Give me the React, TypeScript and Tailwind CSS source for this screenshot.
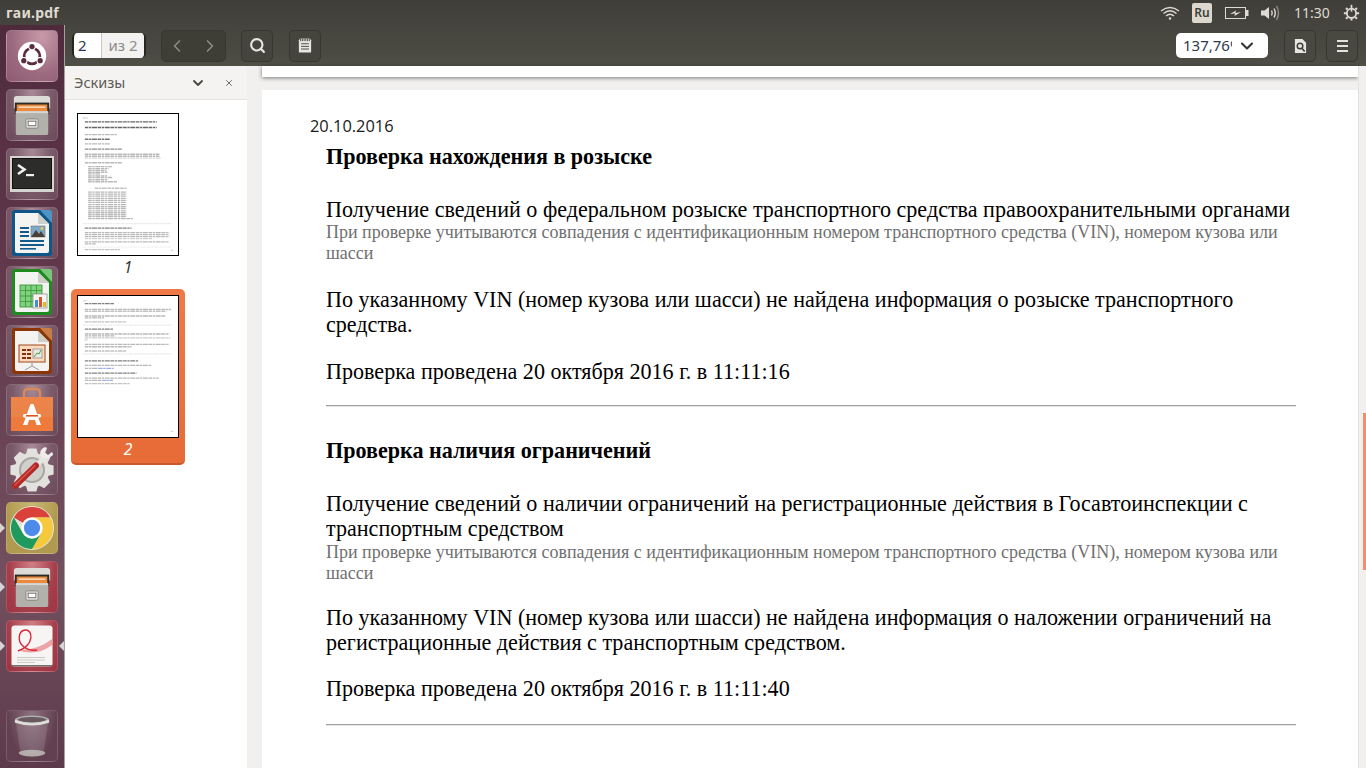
import type { ReactNode } from 'react';
import { ChevronDown, ChevronLeft, ChevronRight, Search, X } from 'lucide-react';

type Line = [number, number, number, number, string?];

// thumbnail text lines: y, x0, x1, opacity, colour (3x coords of the thumbnail)
const thumbOne: Line[] = ([
  [35, 36, 52, 0.15], [47, 42, 262, 0.6], [64, 42, 262, 0.6], [86, 42, 140, 0.28], [100, 42, 120, 0.55],
  [114, 42, 118, 0.28], [130, 42, 155, 0.45], [146, 42, 270, 0.28], [152, 42, 270, 0.28], [158, 42, 275, 0.16],
  [172, 42, 155, 0.28], [184, 52, 125, 0.28], [190, 52, 115, 0.28], [195, 52, 108, 0.28], [201, 52, 112, 0.28],
  [206, 52, 88, 0.28], [212, 52, 110, 0.28], [217, 52, 125, 0.28], [224, 52, 112, 0.28], [230, 52, 140, 0.28],
  [250, 72, 170, 0.24], [262, 52, 170, 0.28], [268, 52, 170, 0.28], [274, 52, 170, 0.28], [281, 52, 170, 0.28],
  [287, 52, 170, 0.28], [293, 52, 170, 0.28], [300, 52, 170, 0.28], [306, 52, 170, 0.28], [312, 52, 170, 0.28],
  [319, 52, 170, 0.28], [325, 52, 170, 0.28], [331, 52, 170, 0.28], [337, 52, 170, 0.28], [343, 52, 190, 0.28],
  [358, 36, 305, 0.08], [372, 42, 185, 0.5], [386, 42, 300, 0.28], [392, 42, 300, 0.28], [398, 42, 300, 0.28],
  [404, 42, 250, 0.18], [414, 42, 300, 0.28], [420, 42, 75, 0.28], [430, 36, 305, 0.05], [438, 42, 150, 0.24],
  [440, 305, 312, 0.16],
] as Line[]).map(([y, x0, x1, o]): Line => [y - 24, x0 - 21, x1 - 21, o]);

const thumbTwo: Line[] = [
  [13, 15, 29, 0.15], [22, 21, 111, 0.5], [40, 21, 284, 0.28], [46, 21, 270, 0.24], [60, 21, 269, 0.28],
  [66, 21, 80, 0.28], [78, 21, 147, 0.24], [88, 15, 287, 0.08], [100, 21, 107, 0.5], [115, 21, 279, 0.28],
  [121, 21, 114, 0.28], [127, 21, 282, 0.2], [133, 21, 29, 0.2], [147, 21, 279, 0.28], [154, 21, 164, 0.28],
  [167, 21, 147, 0.24], [176, 15, 287, 0.08], [197, 21, 184, 0.5], [211, 21, 224, 0.28], [220, 21, 64, 0.28],
  [220, 64, 109, 0.5, '#3b5bdb'], [235, 21, 179, 0.5], [250, 21, 247, 0.28], [257, 21, 74, 0.28],
  [257, 74, 107, 0.5, '#3b5bdb'], [267, 21, 159, 0.24], [413, 284, 291, 0.16],
];

function Thumb({ lines }: { lines: Line[] }) {
  return (
    <div className="w-[102px] h-[143px] bg-white border border-black">
      <svg viewBox="0 0 306 429" className="block w-full h-full blur-[0.4px]">
        {lines.map(([y, x0, x1, o, c], i) => (
          <line key={i} x1={x0} x2={x1} y1={y} y2={y} stroke={c || '#000'} strokeWidth={4} strokeDasharray="11 2 7 2 15 2" opacity={o} />
        ))}
      </svg>
    </div>
  );
}

function Tile({ tone = 'plain', mark, children }: { tone?: 'plain' | 'pink' | 'gold' | 'red' | 'trash'; mark?: 'left' | 'both'; children: ReactNode }) {
  const toneClass = {
    plain: 'bg-[radial-gradient(ellipse_at_50%_0%,#a98b97_0%,#7b5a69_55%,#6c4a5a_100%)]',
    pink: 'bg-[radial-gradient(ellipse_at_70%_10%,#c79aa9_0%,#9c6a7f_60%,#8e5c72_100%)]',
    gold: 'bg-[radial-gradient(ellipse_at_50%_0%,#c9b777_0%,#b09a4f_70%)]',
    red: 'bg-[radial-gradient(ellipse_at_50%_0%,#cf7f86_0%,#a63f4b_65%,#9c3441_100%)]',
    trash: 'bg-[radial-gradient(ellipse_at_50%_0%,#8e7180_0%,#62404f_70%)]',
  }[tone];
  return (
    <div className="relative flex justify-center">
      {mark && <span className="absolute left-0 top-[21px] border-y-[5px] border-l-[5px] border-y-transparent border-l-[#d8d4d6]" />}
      {mark === 'both' && <span className="absolute right-0 top-[21px] border-y-[5px] border-r-[5px] border-y-transparent border-r-[#d8d4d6]" />}
      <div className={`w-[52px] h-[52px] rounded-[5px] flex items-center justify-center overflow-hidden border border-white/15 ${toneClass}`}>
        {children}
      </div>
    </div>
  );
}

function UbuntuIcon() {
  return (
    <svg viewBox="0 0 40 40" className="w-[42px] h-[42px]">
      <circle cx="20" cy="20" r="13.5" fill="#fff" />
      <circle cx="20" cy="20" r="7.5" fill="none" stroke="#5a2c42" strokeWidth="2.6" />
      <circle cx="20" cy="11.2" r="3.5" fill="#fff" />
      <circle cx="12.4" cy="24.4" r="3.5" fill="#fff" />
      <circle cx="27.6" cy="24.4" r="3.5" fill="#fff" />
      <circle cx="20" cy="11" r="2.5" fill="#5a2c42" />
      <circle cx="12.2" cy="24.5" r="2.5" fill="#5a2c42" />
      <circle cx="27.8" cy="24.5" r="2.5" fill="#5a2c42" />
    </svg>
  );
}

function FilesIcon() {
  return (
    <svg viewBox="0 0 44 46" className="w-[42px] h-[44px]">
      <path d="M3 6 Q3 3 6 3 H38 Q41 3 41 6 V16 H3 Z" fill="#dedcd8" />
      <rect x="4" y="10" width="36" height="12" fill="#2d2b29" />
      <rect x="6" y="12" width="32" height="9" fill="#e98a3c" />
      <rect x="8" y="14" width="28" height="1.5" fill="#fbe3c6" />
      <rect x="5" y="19" width="34" height="25" rx="1.5" fill="#b3b1ac" />
      <rect x="5" y="19" width="34" height="2" fill="#d9d7d2" />
      <rect x="15.5" y="27" width="13" height="10" rx="1.5" fill="#d2d0cb" stroke="#8d8b86" />
      <rect x="18" y="29.5" width="8" height="4.5" fill="#fff" stroke="#444" strokeWidth="0.6" />
    </svg>
  );
}

function TerminalIcon() {
  return (
    <svg viewBox="0 0 46 38" className="w-[46px] h-[38px]">
      <rect x="1" y="1" width="44" height="36" fill="#d5d4d0" />
      <rect x="3.5" y="3.5" width="39" height="30" fill="#2c2c2a" stroke="#111" />
      <path d="M9 10 L15.5 14.5 L9 19" fill="none" stroke="#f0f0ee" strokeWidth="2.6" />
      <rect x="17" y="19" width="8" height="2.2" fill="#f0f0ee" />
    </svg>
  );
}

function DocShell({ edge, fold, children }: { edge: string; fold: string; children: ReactNode }) {
  return (
    <svg viewBox="0 0 40 48" className="w-[40px] h-[48px]">
      <rect x="0" y="1" width="40" height="46" rx="3" fill={edge} />
      <path d="M28 1 H38 Q40 1 40 3 V14 Z" fill={fold} />
      <path d="M3 4 H26 L37 15 V42 Q37 44 35 44 H5 Q3 44 3 42 Z" fill="#f3f3f1" />
      <path d="M26 4 L37 15 H26 Z" fill="#cfcfca" />
      {children}
    </svg>
  );
}

function WriterIcon() {
  return (
    <DocShell edge="#0f5688" fold="#4f93c2">
      <rect x="8" y="18" width="9" height="2" fill="#135a8d" />
      <rect x="8" y="22" width="9" height="2" fill="#135a8d" />
      <rect x="8" y="26" width="9" height="2" fill="#135a8d" />
      <rect x="8" y="31" width="24" height="2" fill="#135a8d" />
      <rect x="8" y="35" width="24" height="2" fill="#135a8d" />
      <rect x="8" y="39" width="16" height="1.6" fill="#135a8d" />
      <rect x="19" y="17" width="14" height="11" fill="#7ea8c8" stroke="#777" strokeWidth="0.6" />
      <path d="M19 28 L24 21 L27 25 L29 22 L33 28 Z" fill="#4a4038" />
      <circle cx="30" cy="19.5" r="1.4" fill="#f0c94a" />
    </DocShell>
  );
}

function CalcIcon() {
  return (
    <DocShell edge="#1f8a1f" fold="#7cc67c">
      <rect x="8" y="17" width="22" height="22" fill="#7fd07f" stroke="#2c922c" strokeWidth="0.8" />
      <path d="M8 22.5 H30 M8 28 H30 M8 33.5 H30 M13.5 17 V39 M19 17 V39 M24.5 17 V39" stroke="#2c922c" strokeWidth="0.7" />
      <rect x="21" y="26" width="14" height="14" fill="#f5f5f3" stroke="#888" strokeWidth="0.7" />
      <rect x="23" y="32" width="3" height="7" fill="#3c92d0" />
      <rect x="27" y="29" width="3" height="10" fill="#d8552c" />
      <rect x="31" y="34" width="3" height="5" fill="#e8b52e" />
    </DocShell>
  );
}

function ImpressIcon() {
  return (
    <DocShell edge="#8a3608" fold="#c77c45">
      <rect x="7" y="18" width="26" height="17" fill="#f9d9bf" stroke="#a4481a" strokeWidth="1" />
      <rect x="10" y="22" width="4" height="2" fill="#7a3410" />
      <rect x="15" y="22" width="4" height="2" fill="#7a3410" />
      <rect x="10" y="26" width="4" height="2" fill="#7a3410" />
      <rect x="15" y="26" width="4" height="2" fill="#7a3410" />
      <rect x="10" y="30" width="4" height="2" fill="#7a3410" />
      <rect x="15" y="30" width="4" height="2" fill="#7a3410" />
      <rect x="21" y="22" width="9" height="9" fill="#e9e9e4" stroke="#777" strokeWidth="0.6" />
      <path d="M22 30 L25 26 L27 27 L29 23" fill="none" stroke="#4aa13c" strokeWidth="1" />
      <path d="M20 35 V39 M20 39 L13 43 M20 39 L27 43" stroke="#999" strokeWidth="1" />
    </DocShell>
  );
}

function StoreIcon() {
  return (
    <svg viewBox="0 0 42 46" className="w-[42px] h-[46px]">
      <path d="M13 12 V6 Q13 2 17 2 H25 Q29 2 29 6 V12" fill="none" stroke="#d88a5e" strokeWidth="2.4" />
      <path d="M0 10 H42 V44 H0 Z" fill="#ee7a3b" />
      <path d="M0 10 H42 V30 H0 Z" fill="#ec8348" />
      <path d="M19.5 17 H22.5 L30 38 H25.5 L24 33 H18 L16.5 38 H12 Z" fill="#fff" />
      <rect x="12" y="27" width="18" height="3.6" rx="1.5" fill="#fff" />
      <rect x="15" y="28" width="12" height="1.6" fill="#e0561e" />
    </svg>
  );
}

// eight tooth gear outline, centred on 23,24
const gearPath = Array.from({ length: 8 })
  .map((_, i) => {
    const a = (i * Math.PI) / 4;
    const pts = [
      [a - 0.34, 17.5],
      [a - 0.2, 22],
      [a + 0.2, 22],
      [a + 0.34, 17.5],
    ].map(([t, r]) => `${(23 + r * Math.cos(t)).toFixed(1)} ${(24 + r * Math.sin(t)).toFixed(1)}`);
    return (i === 0 ? 'M' : 'L') + pts.join(' L');
  })
  .join(' ') + ' Z';

function SettingsIcon() {
  return (
    <svg viewBox="0 0 46 46" className="w-[46px] h-[46px]">
      <path d={gearPath} fill="#e2e1dd" />
      <circle cx="23" cy="24" r="13" fill="#a7a6a2" />
      <circle cx="23" cy="24" r="11" fill="#d0cfcb" />
      <path d="M27 20 L37 10" stroke="#e6e5e1" strokeWidth="5" />
      <path d="M36 1 Q29 4 32 11 Q38 15 44 9 Q44 7 43 6 L39 9 L36 7 L38 2 Z" fill="#eeedea" />
      <path d="M6 40 L27 19.5" stroke="#b42a26" strokeWidth="6" strokeLinecap="round" />
      <path d="M6 39 L26 19.5" stroke="#dc5b52" strokeWidth="1.2" strokeLinecap="round" />
    </svg>
  );
}

function ChromeIcon() {
  return (
    <svg viewBox="0 0 48 48" className="w-[46px] h-[46px]">
      <circle cx="24" cy="24" r="23" fill="#e5e3dc" />
      <path d="M24 2 A22 22 0 0 1 43 13 L24 13 A11 11 0 0 0 14.5 18.5 L5 13 A22 22 0 0 1 24 2 Z" fill="#d9413a" />
      <path d="M43 13 A22 22 0 0 1 24 46 L33.5 29.5 A11 11 0 0 0 33.5 18.5 L24 13 Z" fill="#f6c93c" />
      <path d="M24 46 A22 22 0 0 1 5 13 L14.5 29.5 A11 11 0 0 0 33.5 29.5 Z" fill="#1f9a5c" />
      <circle cx="24" cy="24" r="11" fill="#fff" />
      <circle cx="24" cy="24" r="8.5" fill="#4d8bea" />
    </svg>
  );
}

function PdfIcon() {
  return (
    <svg viewBox="0 0 42 42" className="w-[42px] h-[42px]">
      <rect x="0.5" y="0.5" width="41" height="41" rx="3" fill="#f6f5f3" />
      <rect x="0.5" y="40" width="41" height="1.5" fill="#77716e" />
      <path d="M6 25 Q26 26 41 14 V20 Q26 32 6 25 Z" fill="#eda2a6" />
      <path d="M7 26 C24 20 22 4 14 5 C7 6 6 17 13 22 C17 25 20 26 26 25" fill="none" stroke="#d52a36" strokeWidth="1.4" />
      <path d="M6 32.5 H34 M6 35 H34 M6 37.5 H24" stroke="#c4c2be" strokeWidth="0.8" />
    </svg>
  );
}

function TrashIcon() {
  return (
    <svg viewBox="0 0 40 46" className="w-[38px] h-[44px]">
      <path d="M3 8 L8 42 Q20 47 32 42 L37 8 Z" fill="#ffffff" opacity="0.13" />
      <ellipse cx="20" cy="41" rx="14" ry="3.5" fill="#c8c8c4" opacity="0.75" />
      <ellipse cx="20" cy="6" rx="18" ry="4.5" fill="#aeaeaa" />
      <ellipse cx="20" cy="6" rx="15" ry="3" fill="#6a5a60" />
      <path d="M2 6 V9 Q20 15 38 9 V6 Q20 12 2 6 Z" fill="#dcdcd8" />
    </svg>
  );
}

function Launcher() {
  return (
    <aside className="w-[65px] shrink-0 flex flex-col gap-[7px] pt-[5px] pb-[6px] border-r border-[#a99da3] bg-[linear-gradient(180deg,#4f2a3d_0%,#63394c_35%,#71505f_75%,#5d3a4b_100%)]">
      <Tile tone="pink"><UbuntuIcon /></Tile>
      <Tile><FilesIcon /></Tile>
      <Tile><TerminalIcon /></Tile>
      <Tile><WriterIcon /></Tile>
      <Tile><CalcIcon /></Tile>
      <Tile><ImpressIcon /></Tile>
      <Tile><StoreIcon /></Tile>
      <Tile><SettingsIcon /></Tile>
      <Tile tone="gold" mark="left"><ChromeIcon /></Tile>
      <Tile tone="red" mark="left"><FilesIcon /></Tile>
      <Tile tone="red" mark="both"><PdfIcon /></Tile>
      <div className="flex-1" />
      <Tile tone="trash"><TrashIcon /></Tile>
    </aside>
  );
}

function ToolButton({ className = 'w-[32px]', children }: { className?: string; children: ReactNode }) {
  return (
    <div className={`h-[32px] flex items-center justify-center rounded-[5px] border border-[#38372f] ${className}`}>
      {children}
    </div>
  );
}

function Toolbar() {
  return (
    <div className="h-[41px] shrink-0 flex items-center pl-[7px] pr-[8px] bg-[linear-gradient(180deg,#45443d,#4a4941_60%,#504f47)] text-[15px]">
      <div className="w-[74px] h-[25px] flex rounded-[5px] bg-white border-x-2 border-x-[#26251f] overflow-hidden">
        <div className="w-[28px] pl-[4px] leading-[25px] text-[#2d3a50] border-r border-[#c9c7c2]">2</div>
        <div className="flex-1 text-center leading-[25px] text-[#8f8d8a] bg-[#f3f2f0]">из 2</div>
      </div>
      <ToolButton className="w-[65px] ml-[15px] bg-[#3e3d36] gap-[13px]">
        <ChevronLeft size={20} strokeWidth={2} className="text-[#8a8983]" />
        <ChevronRight size={20} strokeWidth={2} className="text-[#8a8983]" />
      </ToolButton>
      <ToolButton className="w-[32px] ml-[15px] bg-[#45443d]">
        <Search size={17} strokeWidth={3} className="text-[#e8e6e0]" />
      </ToolButton>
      <ToolButton className="w-[32px] ml-[16px] bg-[#45443d]">
        <svg viewBox="0 0 16 18" className="w-[14px] h-[17px]">
          <path d="M1 3 L2.5 1 H13.5 L15 3 V16 Q15 17 14 17 H2 Q1 17 1 16 Z" fill="#e8e6e0" />
          <path d="M3 1 V4 M5 1 V4 M7 1 V4 M9 1 V4 M11 1 V4 M13 1 V4 M3.5 7 H12.5 M3.5 10 H12.5 M3.5 13 H12.5" stroke="#3f3e38" strokeWidth="1" />
        </svg>
      </ToolButton>
      <div className="flex-1" />
      <div className="w-[92px] h-[25px] flex items-center rounded-[5px] bg-white pl-[7px] text-[#2d3a50]">
        <span className="w-[49px] overflow-hidden whitespace-nowrap">137,76%</span>
        <ChevronDown size={20} strokeWidth={2.5} className="ml-[5px] text-[#33322e]" />
      </div>
      <ToolButton className="w-[32px] ml-[16px] bg-[#4a4941]">
        <svg viewBox="0 0 14 16" className="w-[13px] h-[16px]">
          <path d="M1 0.5 H9 L13 4.5 V15.5 H1 Z" fill="#e8e6e0" />
          <circle cx="6.5" cy="8" r="3" fill="none" stroke="#3f3e38" strokeWidth="1.6" />
          <path d="M8.5 10.5 L11.5 14" stroke="#3f3e38" strokeWidth="1.8" />
        </svg>
      </ToolButton>
      <ToolButton className="w-[32px] ml-[10px] bg-[#4a4941]">
        <span className="flex flex-col gap-[3px]">
          <span className="block w-[11px] h-[2px] bg-[#e4e2dc]" />
          <span className="block w-[11px] h-[2px] bg-[#e4e2dc]" />
          <span className="block w-[11px] h-[2px] bg-[#e4e2dc]" />
        </span>
      </ToolButton>
    </div>
  );
}

function Sidebar() {
  return (
    <div className="w-[182px] shrink-0 flex flex-col bg-white">
      <div className="h-[34px] shrink-0 flex items-center pl-[9px] bg-[#f4f3f1] border-b border-[#e4e3e0] text-[14.5px] text-[#5d5b56]">
        <span className="flex-1">Эскизы</span>
        <ChevronDown size={16} strokeWidth={2.8} className="text-[#4b4944] mr-[18px]" />
        <X size={10} strokeWidth={2} className="text-[#55534e] mr-[13px]" />
      </div>
      <div className="pl-[6px] pt-[13px]">
        <div className="w-[114px] flex flex-col items-center">
          <Thumb lines={thumbOne} />
          <div className="h-[33px] pt-[1px] italic text-[15.5px] leading-[20px] text-[#33332f]">1</div>
        </div>
        <div className="w-[114px] h-[176px] flex flex-col items-center pt-[6px] rounded-[5px] border-b-2 border-[#c9582a] bg-[linear-gradient(180deg,#f07a46,#e76b37)]">
          <Thumb lines={thumbTwo} />
          <div className="pt-[1px] italic text-[15.5px] leading-[20px] text-white">2</div>
        </div>
      </div>
    </div>
  );
}

function CheckBlock({ heading, title, result, checkedAt, noteGap, resultGap, checkedGap, ruleGap, afterRule }: { heading: string; title: string; result: string; checkedAt: string; noteGap: string; resultGap: string; checkedGap: string; ruleGap: string; afterRule: string }) {
  return (
    <section>
      <h2 className="font-bold text-[22.1px] leading-[25px] text-black">{heading}</h2>
      <p className="mt-[28px]">{title}</p>
      <p className={`text-[17.98px] leading-[21px] text-[#6f6f6f] ${noteGap}`}>
        При проверке учитываются совпадения с идентификационным номером транспортного средства (VIN), номером кузова или шасси
      </p>
      <p className={resultGap}>{result}</p>
      <p className={checkedGap}>{checkedAt}</p>
      <div className={`h-[2px] w-[970px] bg-[#a0a0a0] border-b border-[#e6e6e6] ${ruleGap} ${afterRule}`} />
    </section>
  );
}

function Document() {
  return (
    <div className="flex-1 min-w-0 flex bg-[#f1f0ee]">
      <div className="w-[15px] shrink-0" />
      <div className="flex-1 min-w-0 flex flex-col gap-[13px]">
        <div className="h-[11px] shrink-0 bg-white shadow-[0_1px_4px_rgba(0,0,0,0.5)]" />
        <div className="flex-1 bg-white font-['Liberation_Serif',serif] text-[22.1px] leading-[25px] text-black">
          <div className="pl-[48px] pt-[26px] font-['Open_Sans',sans-serif] text-[16.4px] leading-[20px] text-[#1a1a1a]">20.10.2016</div>
          <div className="pl-[64px] pr-[62px] pt-[8px]">
            <CheckBlock
              heading="Проверка нахождения в розыске"
              title="Получение сведений о федеральном розыске транспортного средства правоохранительными органами"
              result="По указанному VIN (номер кузова или шасси) не найдена информация о розыске транспортного средства."
              checkedAt="Проверка проведена 20 октября 2016 г. в 11:11:16"
              noteGap="mt-0"
              resultGap="mt-[23px]"
              checkedGap="mt-[22px]"
              ruleGap="mt-[21px]"
              afterRule="mb-[31px]"
            />
            <CheckBlock
              heading="Проверка наличия ограничений"
              title="Получение сведений о наличии ограничений на регистрационные действия в Госавтоинспекции с транспортным средством"
              result="По указанному VIN (номер кузова или шасси) не найдена информация о наложении ограничений на регистрационные действия с транспортным средством."
              checkedAt="Проверка проведена 20 октября 2016 г. в 11:11:40"
              noteGap="mt-[1px]"
              resultGap="mt-[21px]"
              checkedGap="mt-[21px]"
              ruleGap="mt-[23px]"
              afterRule="mb-0"
            />
          </div>
        </div>
      </div>
      <div className="w-[8px] shrink-0 flex justify-end bg-[#f1f0ee] border-l border-[#e2e1de]">
        <div className="w-[3px] h-[157px] mt-[347px] bg-[#f58f63]" />
      </div>
    </div>
  );
}

export default function App() {
  return (
    <div className="h-screen w-full overflow-hidden flex flex-col bg-white font-['Noto_Sans','Open_Sans',sans-serif]">
      {/* Menu bar */}
      <header className="h-[25px] shrink-0 flex items-center pl-[6px] bg-[linear-gradient(180deg,#3f3e39,#45443e)] text-[#dfdbd2]">
        <span className="flex-1 font-bold text-[14px] tracking-[0.2px]">гаи.pdf</span>
        <svg viewBox="0 0 20 14" className="w-[20px] h-[14px] text-[#dfdbd2]" fill="none" stroke="currentColor" strokeWidth="1.4">
          <path d="M1 5 Q10 -2 19 5 M3.5 7.5 Q10 2 16.5 7.5 M6 10 Q10 6.5 14 10" />
          <circle cx="10" cy="12.5" r="1.2" fill="currentColor" stroke="none" />
        </svg>
        <span className="ml-[12px] w-[20px] h-[20px] rounded-[2px] bg-[#dcd8cf] text-[#3f3e39] text-[12px] font-semibold leading-[20px] text-center">Ru</span>
        <svg viewBox="0 0 24 12" className="ml-[13px] w-[24px] h-[12px]" fill="none" stroke="#dfdbd2" strokeWidth="1">
          <rect x="0.5" y="0.5" width="20" height="11" />
          <rect x="21" y="3.5" width="2" height="5" fill="#dfdbd2" />
          <path d="M5 7 L11 3.5 L10.5 6 L16 5 L9.5 9 L10 6.5 Z" fill="#dfdbd2" stroke="none" />
        </svg>
        <svg viewBox="0 0 20 16" className="ml-[12px] w-[20px] h-[16px]" fill="none" stroke="#dfdbd2" strokeWidth="1.4">
          <path d="M0 5.5 H3.5 L8 2 V14 L3.5 10.5 H0 Z" fill="#dfdbd2" stroke="none" />
          <path d="M10.5 5.5 Q12 8 10.5 10.5" />
          <path d="M13 3.5 Q15.5 8 13 12.5" />
          <path d="M15.5 1 Q19.5 8 15.5 15" stroke="#8f8d86" />
        </svg>
        <span className="ml-[13px] text-[14px] w-[36px] text-[#dfdbd2]">11:30</span>
        <svg viewBox="0 0 20 20" className="ml-[13px] mr-[6px] w-[17px] h-[17px]" fill="none" stroke="#dfdbd2">
          <circle cx="10" cy="11" r="5.5" strokeWidth="2.2" />
          <path d="M10 1 V9" strokeWidth="2" />
          <path d="M10 17 V19.5 M1 11 H3.5 M16.5 11 H19 M3.6 4.6 L5.4 6.4 M14.6 15.6 L16.4 17.4 M3.6 17.4 L5.4 15.6 M14.6 6.4 L16.4 4.6" strokeWidth="2.4" />
        </svg>
      </header>
      <div className="flex-1 min-h-0 flex">
        <Launcher />
        <main className="flex-1 min-w-0 flex flex-col">
          <Toolbar />
          <div className="flex-1 min-h-0 flex">
            <Sidebar />
            <Document />
          </div>
        </main>
      </div>
    </div>
  );
}
